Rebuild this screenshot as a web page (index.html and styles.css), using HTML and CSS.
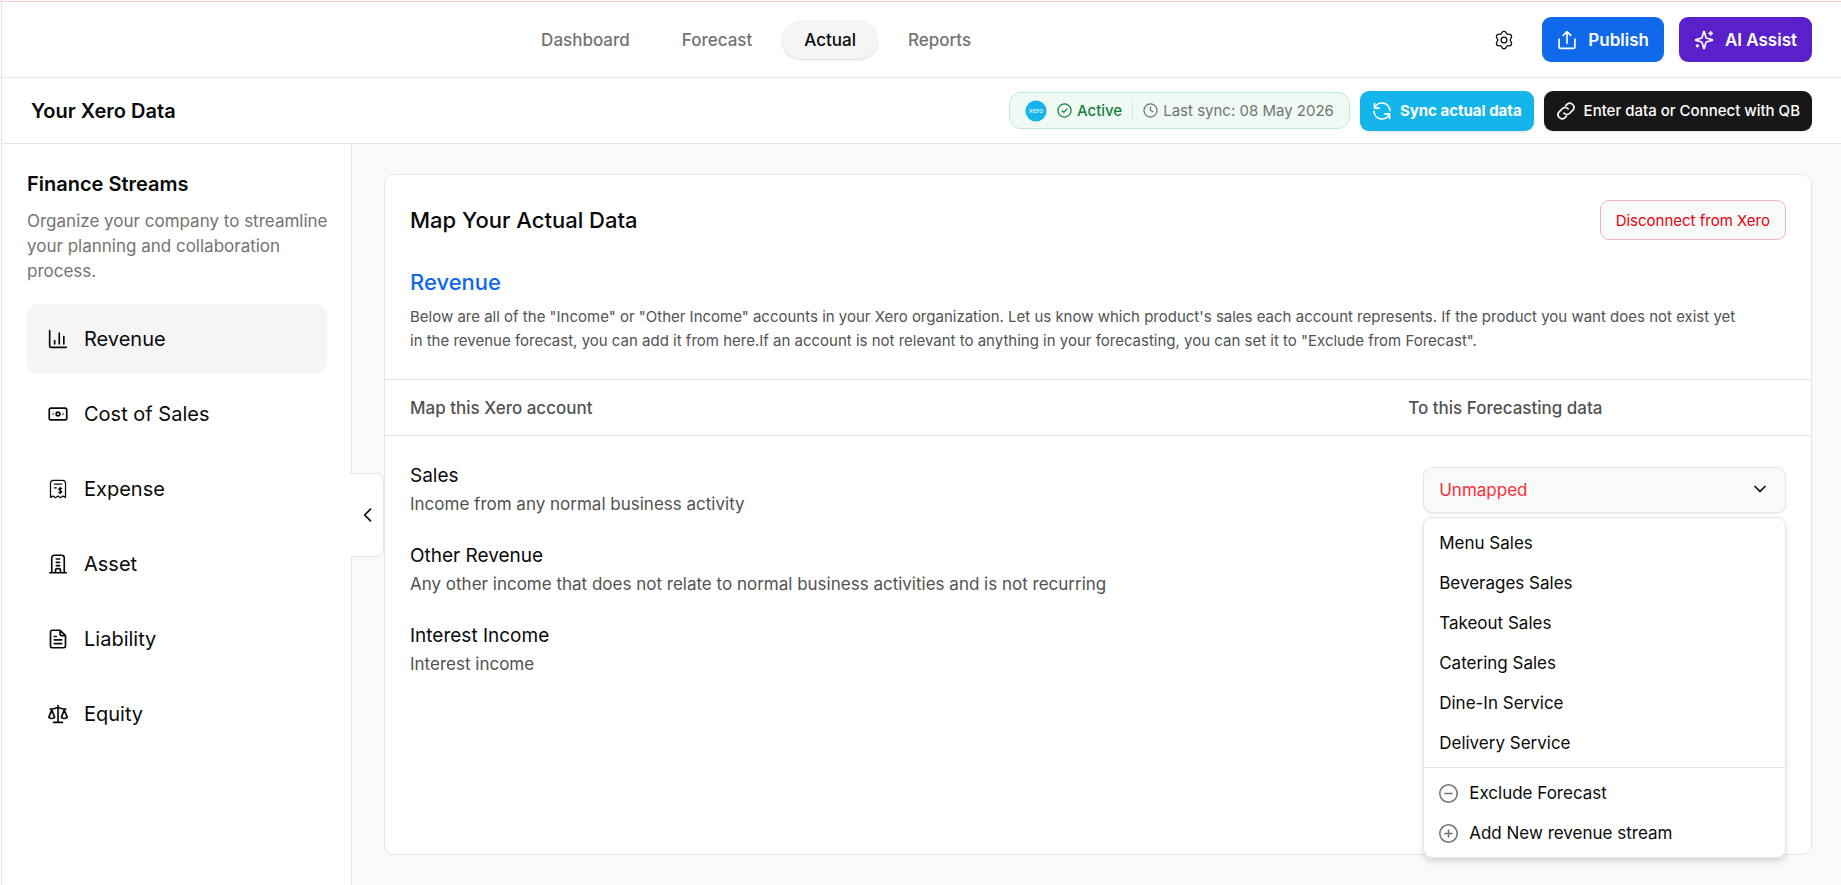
FILE: index.html
```html
<!DOCTYPE html>
<html lang="en">
<head>
    <meta charset="UTF-8">
    <meta name="viewport" content="width=device-width, initial-scale=1.0">
    <title>Your Xero Data</title>
    <link rel="stylesheet" href="styles.css">
</head>
<body>
    <div class="app">
        <header class="topbar">
            <div class="brand"></div>
            <nav class="nav">
                <a href="#" class="nav-link">Dashboard</a>
                <a href="#" class="nav-link">Forecast</a>
                <a href="#" class="nav-link active">Actual</a>
                <a href="#" class="nav-link">Reports</a>
            </nav>
            <div class="actions">
                <button class="icon-btn" aria-label="Settings">
                    <svg class="icon" viewBox="0 0 24 24"><path d="M9.200 3.600C9.700 2.200 10.500 1.500 12 1.500s2.300.7 2.800 2.100c.4 1.200 1.500 1.800 2.700 1.500 1.500-.3 2.600 0 3.300 1.300s.5 2.400-.5 3.500c-.9 1-.9 2.900 0 4.200 1 1.100 1.200 2.200.5 3.500s-1.800 1.600-3.300 1.300c-1.200-.3-2.300.3-2.700 1.500-.5 1.400-1.300 2.100-2.800 2.100s-2.300-.7-2.800-2.100c-.4-1.200-1.500-1.800-2.700-1.500-1.500.3-2.600 0-3.300-1.300s-.5-2.400.5-3.500c.9-1.300.9-3.200 0-4.200-1-1.100-1.200-2.200-.5-3.500s1.800-1.600 3.300-1.300c1.200.3 2.300-.3 2.700-1.500z"/><circle cx="12" cy="12" r="3.500"/></svg>
                </button>
                <button class="btn btn-publish">
                    <svg class="icon" viewBox="0 0 24 24"><path d="M12 16V2M7.500 6.500 12 2l4.500 4.500M2.500 11v9a2 2 0 0 0 2 2h15a2 2 0 0 0 2-2v-9"/></svg>
                    Publish
                </button>
                <button class="btn btn-ai">
                    <svg class="icon" viewBox="0 0 24 24"><path d="M9.900 15.500A2 2 0 0 0 8.500 14.100L2.400 12.500a.5.5 0 0 1 0-1L8.500 9.900A2 2 0 0 0 9.900 8.500L11.500 2.400a.5.5 0 0 1 1 0L14.100 8.500A2 2 0 0 0 15.500 9.900L21.600 11.500a.5.5 0 0 1 0 1L15.500 14.100a2 2 0 0 0-1.400 1.400L12.500 21.600a.5.5 0 0 1-1 0zM20 2v4M22 4h-4"/><circle cx="4" cy="19" r="1"/></svg>
                    AI Assist
                </button>
            </div>
        </header>

        <div class="subbar">
            <h1 class="page-title">Your Xero Data</h1>
            <div class="sub-actions">
                <div class="status">
                    <svg class="xero-logo" viewBox="0 0 22 22"><circle cx="11" cy="11" r="10.500"/><text x="11" y="13" text-anchor="middle">xero</text></svg>
                    <span class="status-active">
                        <svg class="icon" viewBox="0 0 24 24"><circle cx="12" cy="12" r="10.500"/><path d="m8 12.500 3 2.500 5-5.500"/></svg>
                        Active
                    </span>
                    <span class="status-sync">
                        <svg class="icon" viewBox="0 0 24 24"><circle cx="12" cy="12" r="10.500"/><path d="M12 6v6l4 2"/></svg>
                        Last sync: 08 May 2026
                    </span>
                </div>
                <button class="btn-sm btn-sync">
                    <svg class="icon" viewBox="0 0 24 24"><path d="M3 3v5.500h5.500M3.200 8.300A9.500 9.500 0 0 1 21.500 11.500M21 21v-5.500h-5.500M20.800 15.700A9.500 9.500 0 0 1 2.500 12.500"/></svg>
                    Sync actual data
                </button>
                <button class="btn-sm btn-connect">
                    <svg class="icon" viewBox="0 0 24 24"><path d="M9.500 14.500a5 5 0 0 0 7 .2l4-4a5 5 0 0 0-7-7l-2 2M14.500 9.500a5 5 0 0 0-7-.2l-4 4a5 5 0 0 0 7 7l2-2"/></svg>
                    Enter data or Connect with QB
                </button>
            </div>
        </div>

        <div class="main">
            <aside class="sidebar">
                <h2 class="sidebar-title">Finance Streams</h2>
                <p class="sidebar-text">Organize your company to streamline your planning and collaboration process.</p>
                <nav class="streams">
                    <a href="#" class="stream active">
                        <svg class="icon" viewBox="0 0 24 24"><path d="M2 2v18a2 2 0 0 0 2 2h18M8 18v-4M13.500 18V5M19 18V9"/></svg>
                        Revenue
                    </a>
                    <a href="#" class="stream">
                        <svg class="icon" viewBox="0 0 24 24"><rect x="1.500" y="5" width="21" height="14" rx="2"/><circle cx="12" cy="12" r="2.200"/><path d="M6 12h.01M18 12h.01"/></svg>
                        Cost of Sales
                    </a>
                    <a href="#" class="stream">
                        <svg class="icon icon-thin" viewBox="0 0 24 24"><path d="M3 22V5c0-2.500 1-3.500 3.500-3.500h11c2.500 0 3.500 1 3.500 3.500v17l-3-1.500-3 2-3-2-3 2-3-2zM7.500 6h9M7.500 10.500H10M16.500 11.500c-.5-1-3.500-1-3.500.8s3.500 1.200 3.500 3-3 1.800-3.600.6M14.700 10v7.500"/></svg>
                        Expense
                    </a>
                    <a href="#" class="stream">
                        <svg class="icon" viewBox="0 0 24 24"><path d="M2 22.500h20M4.500 22V4.500a3 3 0 0 1 3-3h9a3 3 0 0 1 3 3V22M10 6h4M10 10h4M10 14h4M9 22v-2.500a2 2 0 0 1 2-2h2a2 2 0 0 1 2 2V22"/></svg>
                        Asset
                    </a>
                    <a href="#" class="stream">
                        <svg class="icon" viewBox="0 0 24 24"><path d="M14.500 1.500H5a2 2 0 0 0-2 2v17a2 2 0 0 0 2 2h14a2 2 0 0 0 2-2V8zM14.500 1.500V6a2 2 0 0 0 2 2H21M7.500 9H10M7.500 13h9M7.500 17.500h9"/></svg>
                        Liability
                    </a>
                    <a href="#" class="stream">
                        <svg class="icon" viewBox="0 0 24 24"><path d="M12 2v20M6.500 22h11M2.500 6H5c2.500 0 5-1 7-2 2 1 4.500 2 7 2h2.500M4.500 7l-3.500 9c2 1.600 5 1.600 7 0zM19.500 7 16 16c2 1.600 5 1.600 7 0z"/></svg>
                        Equity
                    </a>
                </nav>
                <button class="collapse" aria-label="Collapse sidebar">
                    <svg class="icon" viewBox="0 0 24 24"><path d="m15 5-7 7 7 7"/></svg>
                </button>
            </aside>

            <main class="content">
                <section class="card">
                    <div class="card-head">
                        <div class="card-title-row">
                            <h2 class="card-title">Map Your Actual Data</h2>
                            <button class="btn-disconnect">Disconnect from Xero</button>
                        </div>
                        <h3 class="card-subtitle">Revenue</h3>
                        <p class="card-text">Below are all of the "Income" or "Other Income" accounts in your Xero organization. Let us know which product's sales each account represents. If the product you want does not exist yet in the revenue forecast, you can add it from here.If an account is not relevant to anything in your forecasting, you can set it to "Exclude from Forecast".</p>
                    </div>
                    <table class="map-table">
                        <thead>
                            <tr>
                                <th>Map this Xero account</th>
                                <th class="col-target">To this Forecasting data</th>
                            </tr>
                        </thead>
                        <tbody>
                            <tr>
                                <td>
                                    <label class="account" for="map-sales">Sales</label>
                                    <p class="account-text">Income from any normal business activity</p>
                                </td>
                                <td class="cell-target">
                                    <div class="picker">
                                        <select id="map-sales" class="select">
                                            <option>Unmapped</option>
                                        </select>
                                        <svg class="icon chevron" viewBox="0 0 24 24"><path d="m6 9 6 6 6-6"/></svg>
                                        <div class="menu">
                                            <ul class="menu-list">
                                                <li><button class="menu-item">Menu Sales</button></li>
                                                <li><button class="menu-item">Beverages Sales</button></li>
                                                <li><button class="menu-item">Takeout Sales</button></li>
                                                <li><button class="menu-item">Catering Sales</button></li>
                                                <li><button class="menu-item">Dine-In Service</button></li>
                                                <li><button class="menu-item">Delivery Service</button></li>
                                            </ul>
                                            <ul class="menu-list">
                                                <li><button class="menu-item">
                                                    <svg class="icon" viewBox="0 0 24 24"><circle cx="12" cy="12" r="11"/><path d="M7.500 12h9"/></svg>
                                                    Exclude Forecast
                                                </button></li>
                                                <li><button class="menu-item">
                                                    <svg class="icon" viewBox="0 0 24 24"><circle cx="12" cy="12" r="11"/><path d="M7.500 12h9M12 7.500v9"/></svg>
                                                    Add New revenue stream
                                                </button></li>
                                            </ul>
                                        </div>
                                    </div>
                                </td>
                            </tr>
                            <tr>
                                <td>
                                    <span class="account">Other Revenue</span>
                                    <p class="account-text">Any other income that does not relate to normal business activities and is not recurring</p>
                                </td>
                                <td></td>
                            </tr>
                            <tr>
                                <td>
                                    <span class="account">Interest Income</span>
                                    <p class="account-text">Interest income</p>
                                </td>
                                <td></td>
                            </tr>
                        </tbody>
                    </table>
                </section>
            </main>
        </div>
    </div>
</body>
</html>
```
FILE: styles.css
```css
* {
    box-sizing: border-box;
}

body {
    margin: 0;
    padding-left: 1px;
    font-family: Inter, "Liberation Sans", sans-serif;
    font-size: 17px;
    color: #0a0a0a;
    background: #fafafa;
}

h1, h2, h3, p, ul {
    margin: 0;
    padding: 0;
}

h2, h3 {
    font-weight: 500;
}

ul {
    list-style: none;
}

a {
    color: inherit;
    text-decoration: none;
}

button, select {
    font: inherit;
    color: inherit;
    border: none;
    background: none;
    cursor: pointer;
}

.icon {
    width: 20px;
    height: 20px;
    flex-shrink: 0;
    fill: none;
    stroke: currentColor;
    stroke-width: 2;
    stroke-linecap: round;
    stroke-linejoin: round;
}

.icon-thin {
    stroke-width: 1.5;
}

.app {
    display: flex;
    flex-direction: column;
    min-height: 100vh;
    padding-top: 1px;
    border-left: 1px solid #e5e5e5;
    background: #fff;
}

/* top bar */
.topbar {
    display: flex;
    align-items: center;
    justify-content: space-between;
    height: 77px;
    padding: 0 29px;
    border-top: 1px solid #fbc9cd;
    border-bottom: 1px solid #e5e5e5;
}

.nav {
    display: flex;
    gap: 8px;
}

.nav-link {
    padding: 0 22px;
    line-height: 38px;
    border-radius: 20px;
    font-weight: 500;
    color: #737373;
}

.nav-link.active {
    color: #0a0a0a;
    background: #f5f5f5;
    box-shadow: 0 1px 2px rgba(0, 0, 0, 0.15);
}

.actions {
    display: flex;
    align-items: center;
    gap: 15px;
}

.icon-btn {
    display: flex;
    padding: 13px;
}

.icon-btn .icon {
    stroke-width: 1.5;
}

.btn {
    display: flex;
    align-items: center;
    gap: 11px;
    height: 45px;
    padding: 0 15px;
    border-radius: 9px;
    font-weight: 600;
    color: #fff;
}

.btn-publish {
    background: #1068eb;
}

.btn-ai {
    background: #5a21cb;
}

/* page bar */
.subbar {
    display: flex;
    align-items: center;
    justify-content: space-between;
    height: 66px;
    padding: 0 29px;
    border-bottom: 1px solid #e5e5e5;
}

.page-title {
    font-size: 20px;
    font-weight: 600;
}

.sub-actions {
    display: flex;
    align-items: center;
    gap: 10px;
}

.status {
    display: flex;
    align-items: center;
    gap: 10px;
    height: 37px;
    padding: 0 15px;
    border: 1px solid #b9efcf;
    border-radius: 12px;
    background: #f0faf5;
    font-size: 15px;
}

.status .icon {
    width: 15px;
    height: 15px;
}

.xero-logo {
    width: 22px;
    height: 22px;
}

.xero-logo circle {
    fill: #13b5ea;
}

.xero-logo text {
    fill: #fff;
    font-size: 7px;
}

.status-active, .status-sync {
    display: flex;
    align-items: center;
    gap: 5px;
}

.status-active {
    font-weight: 500;
    color: #15803d;
}

.status-sync {
    padding-left: 10px;
    border-left: 1px solid #e0e3e1;
    color: #737373;
}

.btn-sm {
    display: flex;
    align-items: center;
    gap: 8px;
    height: 40px;
    padding: 0 12px;
    border-radius: 9px;
    font-size: 15px;
    color: #fff;
    box-shadow: 0 1px 2px rgba(0, 0, 0, 0.1);
}

.btn-sync {
    font-weight: 700;
    background: #13b5ea;
}

.btn-connect {
    font-weight: 500;
    background: #171717;
}

/* layout */
.main {
    display: flex;
    flex: 1;
}

.sidebar {
    position: relative;
    flex: 0 0 350px;
    padding: 27px 20px 24px 25px;
    border-right: 1px solid #e5e5e5;
}

.sidebar-title {
    font-size: 20px;
    font-weight: 600;
    line-height: 27px;
}

.sidebar-text {
    margin: 11px 0 20px;
    line-height: 25px;
    color: #737373;
}

.streams {
    display: flex;
    flex-direction: column;
    gap: 5px;
    padding-right: 4px;
}

.stream {
    display: flex;
    align-items: center;
    gap: 16px;
    height: 70px;
    padding: 0 21px;
    border-radius: 12px;
    font-size: 20px;
}

.stream.active {
    background: #f5f5f5;
}

/* handle over the content area */
.collapse {
    position: absolute;
    top: 329px;
    left: 100%;
    display: flex;
    align-items: center;
    width: 33px;
    height: 84px;
    padding: 0 7px;
    border: 1px solid #e5e5e5;
    border-left: none;
    border-radius: 0 8px 8px 0;
    background: #fff;
}

.content {
    display: flex;
    flex: 1;
    padding: 30px 29px 30px 32px;
    background: #f8faf9;
}

.card {
    flex: 1;
    border: 1px solid #e5e5e5;
    border-radius: 10px;
    background: #fff;
}

.card-head {
    padding: 25px 25px 26px;
}

.card-title-row {
    display: flex;
    align-items: center;
    justify-content: space-between;
}

.card-title {
    font-size: 22px;
}

.btn-disconnect {
    height: 40px;
    padding: 0 15px;
    border: 1px solid #f0b4b8;
    border-radius: 9px;
    font-size: 15px;
    color: #e7000b;
    background: #f8faf9;
}

.card-subtitle {
    margin: 26px 0 7px;
    font-size: 22px;
    line-height: 32px;
    color: #1068eb;
}

.card-text {
    padding-right: 40px;
    font-size: 15px;
    line-height: 24px;
    color: #525252;
}

.map-table {
    width: 100%;
    border-collapse: collapse;
}

.map-table th {
    height: 56px;
    padding: 0 25px;
    border-top: 1px solid #e5e5e5;
    border-bottom: 1px solid #e5e5e5;
    font-weight: 500;
    text-align: left;
    color: #525252;
}

.map-table .col-target {
    width: 30%;
}

.map-table td {
    padding: 12px 25px;
}

.map-table tr:first-child td {
    padding-top: 26px;
}

.map-table .cell-target {
    padding-left: 40px;
}

.account {
    display: block;
    font-size: 19px;
    line-height: 28px;
}

.account-text {
    line-height: 28px;
    color: #525252;
}

/* account picker */
.picker {
    position: relative;
}

.select {
    display: block;
    width: 100%;
    height: 46px;
    padding: 0 15px;
    border: 1px solid #e5e5e5;
    border-radius: 9px;
    appearance: none;
    color: #fb2c36;
    background: #f8faf9;
    box-shadow: 0 1px 2px rgba(0, 0, 0, 0.08);
}

.chevron {
    position: absolute;
    top: 12px;
    right: 16px;
    pointer-events: none;
}

.menu {
    position: absolute;
    top: calc(100% + 4px);
    left: 0;
    right: 0;
    border: 1px solid #e5e5e5;
    border-radius: 9px;
    background: #fff;
    box-shadow: 0 4px 6px rgba(0, 0, 0, 0.13);
}

.menu-list {
    padding: 5px 0 4px;
}

.menu-list + .menu-list {
    border-top: 1px solid #e5e5e5;
}

.menu-item {
    display: flex;
    align-items: center;
    gap: 11px;
    width: 100%;
    height: 40px;
    padding: 0 15px;
    text-align: left;
}

.menu-item .icon {
    width: 19px;
    height: 19px;
    color: #737373;
}
```
